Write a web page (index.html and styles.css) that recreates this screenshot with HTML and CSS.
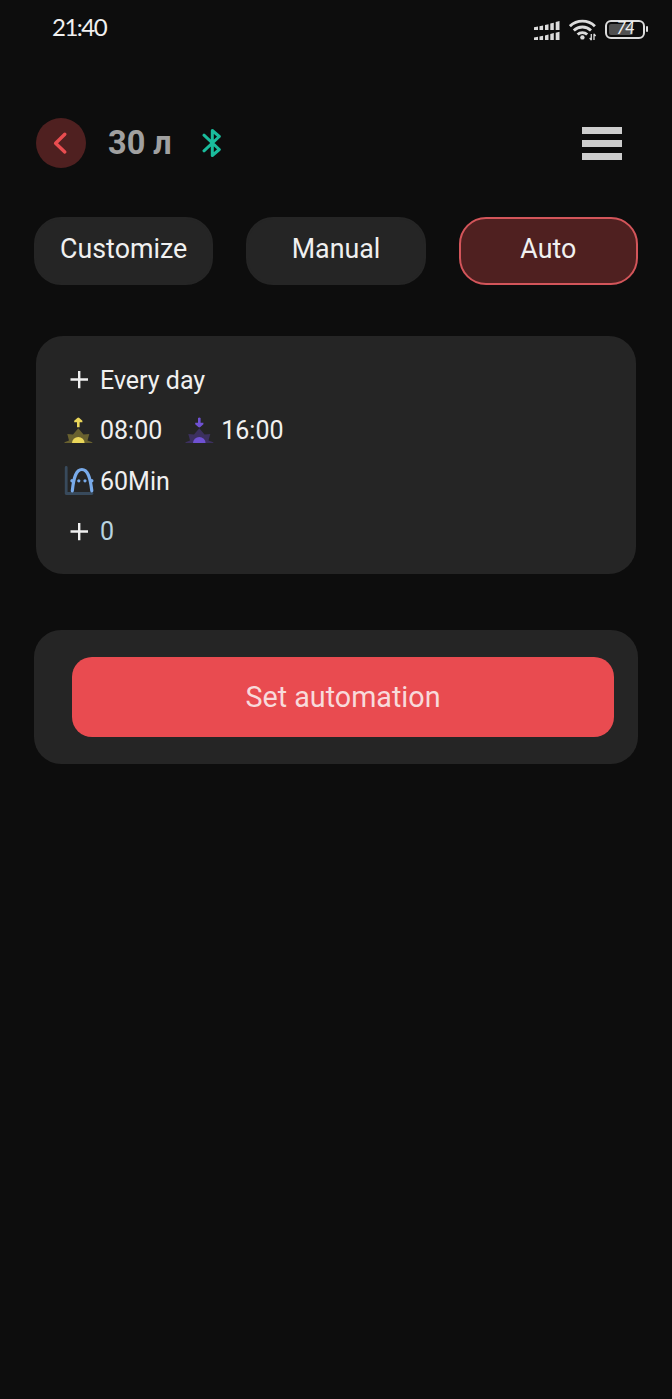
FILE: index.html
```html
<!DOCTYPE html>
<html lang="en">
<head>
    <meta charset="UTF-8">
    <meta name="viewport" content="width=device-width, initial-scale=1.0">
    <title>30 л</title>
    <link rel="stylesheet" href="styles.css">
</head>
<body>

<!-- Status bar -->
<div class="status-bar">
    <span class="clock">21:40</span>
    <div class="status-icons">
        <svg class="signal" width="26" height="20" viewBox="0 0 26 20" fill="#dcdcdc">
            <path d="M0 6.2l4-.6V9H0zM5.5 5.2l3.600-.8V9H5.500zM11 4l3.500-.8V9H11zM16.300 2.500l3.500-.8V9h-3.500zM21.700 1l3.800-1v9h-3.800z"/>
            <path d="M0 16.400l4-.6V19H0zM5.500 15.600l3.600-.8V19H5.500zM11 14.400l3.500-.8V19H11zM16.300 12.900l3.500-.8V19h-3.500zM21.700 11.800l3.800-1V19h-3.800z"/>
        </svg>
        <svg class="wifi" width="28" height="22" viewBox="0 0 28 22" fill="none" stroke="#dcdcdc" stroke-width="2.900">
            <path d="M.9 7.200a18 18 0 0 1 25 0M4.800 11.500a12.500 12.500 0 0 1 17.200 0M8.600 15.500a7 7 0 0 1 9.600 0"/>
            <circle cx="13.400" cy="18.400" r="2.200" fill="#dcdcdc" stroke="none"/>
            <path d="M22.300 15v6.200M20.700 19l1.600 2M25 21v-6.200M26.600 17l-1.600-2" stroke-width="1.300"/>
        </svg>
        <div class="battery">
            <div class="battery-body"><div class="battery-level" style="width: 74%"></div><span class="battery-text">74</span></div>
            <div class="battery-tip"></div>
        </div>
    </div>
</div>

<div class="header">
    <button class="back-btn">
        <svg width="50" height="50" viewBox="0 0 50 50" fill="none" stroke="#e84d50" stroke-width="3.400" stroke-linecap="round" stroke-linejoin="round">
            <path d="M28.800 16.300L19.600 25.200L28.800 33.900"/>
        </svg>
    </button>
    <h1>30 л</h1>
    <svg class="bluetooth" width="20" height="30" viewBox="0 0 20 30" fill="none" stroke="#1abc9c" stroke-width="3" stroke-linecap="round" stroke-linejoin="round">
        <path d="M2 7.200L17.300 21.500L10.300 27.500V2.500L17.300 8.500L2 22.800"/>
    </svg>
    <button class="menu-btn">
        <span></span>
        <span></span>
        <span></span>
    </button>
</div>

<div class="tabs">
    <button class="tab">Customize</button>
    <button class="tab">Manual</button>
    <button class="tab active">Auto</button>
</div>

<!-- Schedule -->
<div class="schedule">
    <div class="row">
        <svg width="30" height="30" viewBox="0 0 30 30" stroke="#f0f0f0" stroke-width="2.400"><path d="M6.500 14.500h17.500M15.200 6v17.300"/></svg>
        <span>Every day</span>
    </div>
    <div class="row">
        <svg width="30" height="30" viewBox="0 0 30 30">
            <path fill="#69612f" d="M.5 27V26.300L5 24.500L3.300 18L9 18.500L14.300 12.300L19.500 18.500L25.300 18L23.500 24.500L28.300 26.300V27z"/>
            <path fill="#ebd75a" d="M8 27a6.300 6 0 0 1 12.600 0z"/>
            <path fill="#ebd75a" d="M13 11.300V6.200H10.200V4.700L13.300 1.900q1-.8 2 0L18.400 4.700V6.200H15.600V11.300z"/>
        </svg>
        <span class="time">08:00</span>
        <svg width="30" height="30" viewBox="0 0 30 30">
            <path fill="#3c305f" d="M.5 27V26.300L5 24.500L3.300 18L9 18.500L14.300 12.300L19.500 18.500L25.300 18L23.500 24.500L28.300 26.300V27z"/>
            <path fill="#6f51d3" d="M8 27a6.300 6 0 0 1 12.600 0z"/>
            <path fill="#6f51d3" d="M13 2V6.700H10.200V8.200L13.300 11q1 .8 2 0L18.400 8.200V6.700H15.600V2q-1.300-1.200-2.600 0z"/>
        </svg>
        <span>16:00</span>
    </div>
    <div class="row">
        <svg width="30" height="30" viewBox="0 0 30 30" fill="none" stroke-linecap="round">
            <path stroke="#384a5c" stroke-width="2.800" stroke-linejoin="round" d="M2.200 1.500V27.500H28"/>
            <path stroke="#79abea" stroke-width="3.200" d="M8.300 24.800C9.800 10.500 12.300 3.500 17.900 3.500S26.200 10.500 27.800 24.800"/>
            <g fill="#79abea"><circle cx="8" cy="14.800" r="1.700"/><circle cx="14.800" cy="14.800" r="1.600"/><circle cx="21" cy="14.800" r="1.600"/><circle cx="27.800" cy="14.800" r="1.700"/></g>
        </svg>
        <span>60Min</span>
    </div>
    <div class="row">
        <svg width="30" height="30" viewBox="0 0 30 30" stroke="#f0f0f0" stroke-width="2.400"><path d="M6.500 14.500h17.500M15.200 6v17.300"/></svg>
        <span class="count">0</span>
    </div>
</div>

<div class="action">
    <button class="action-btn">Set automation</button>
</div>

</body>
</html>
```
FILE: styles.css
```css
* {
    box-sizing: border-box;
}
body {
    font-family: Roboto, sans-serif;
    background-color: #0d0d0d;
    color: #f0f0f0;
    margin: 0;
    min-height: 100vh;
}
button {
    font-family: inherit;
    border: none;
    padding: 0;
    cursor: pointer;
}
svg {
    display: block;
    flex-shrink: 0;
}
.status-bar {
    display: flex;
    justify-content: space-between;
    align-items: center;
    height: 58px;
    padding: 0 24px 0 52px;
}
.clock {
    font-family: Lato, sans-serif;
    font-size: 24px;
    letter-spacing: -1.5px;
    padding-bottom: 5px;
}
.status-icons {
    display: flex;
    align-items: center;
    gap: 9px;
}
.signal {
    margin-top: 3px;
}
.wifi {
    margin-top: 2px;
}
.battery {
    display: flex;
    align-items: center;
    gap: 1px;
    margin-left: -1px;
}
.battery-body {
    position: relative;
    width: 40px;
    height: 19px;
    padding: 2px;
    border: 2px solid #dcdcdc;
    border-radius: 6px;
}
.battery-level {
    height: 100%;
    background-color: #505050;
    border-radius: 2px;
}
.battery-text {
    position: absolute;
    inset: 0;
    font-family: Lato, sans-serif;
    font-size: 17px;
    font-style: italic;
    letter-spacing: -1px;
    line-height: 12px;
    text-align: center;
}
.battery-tip {
    width: 2px;
    height: 6px;
    background-color: #dcdcdc;
    border-radius: 1px;
}
.header {
    display: flex;
    align-items: center;
    height: 50px;
    margin-top: 60px;
    padding: 0 50px 0 36px;
}
.back-btn {
    width: 50px;
    height: 50px;
    border-radius: 50%;
    background-color: #4f2020;
}
h1 {
    font-size: 32.5px;
    line-height: 50px;
    color: #a0a0a0;
    margin: 0 0 0 22px;
}
.bluetooth {
    margin-left: 30.5px;
}
.menu-btn {
    display: flex;
    flex-direction: column;
    gap: 6px;
    width: 40px;
    margin-left: auto;
    background: none;
}
.menu-btn span {
    height: 7px;
    background-color: #cdcdcd;
}
.tabs {
    display: grid;
    grid-template-columns: repeat(3, 1fr);
    gap: 33px;
    margin: 49px 34px 0;
}
.tab {
    height: 68px;
    padding: 0 0 5px;
    border: 2px solid #252525;
    border-radius: 27px;
    background-color: #252525;
    color: #f0f0f0;
    font-size: 26.8px;
}
.tab.active {
    background-color: #4f2020;
    border-color: #d3555a;
}
.schedule {
    height: 238px;
    margin: 51px 36px 0;
    padding: 19px 28px;
    border-radius: 27px;
    background-color: #252525;
}
.row {
    display: flex;
    align-items: center;
    gap: 6px;
    height: 50.5px;
    font-size: 25px;
}
.time {
    margin-right: 17px;
}
.count {
    color: #b8d3e0;
}
.action {
    height: 134px;
    margin: 56px 34px 0;
    padding: 27px 24px 27px 38px;
    border-radius: 27px;
    background-color: #252525;
}
.action-btn {
    width: 100%;
    height: 80px;
    border-radius: 20px;
    background-color: #e94b50;
    color: #f8dadb;
    font-size: 28.7px;
}
```
